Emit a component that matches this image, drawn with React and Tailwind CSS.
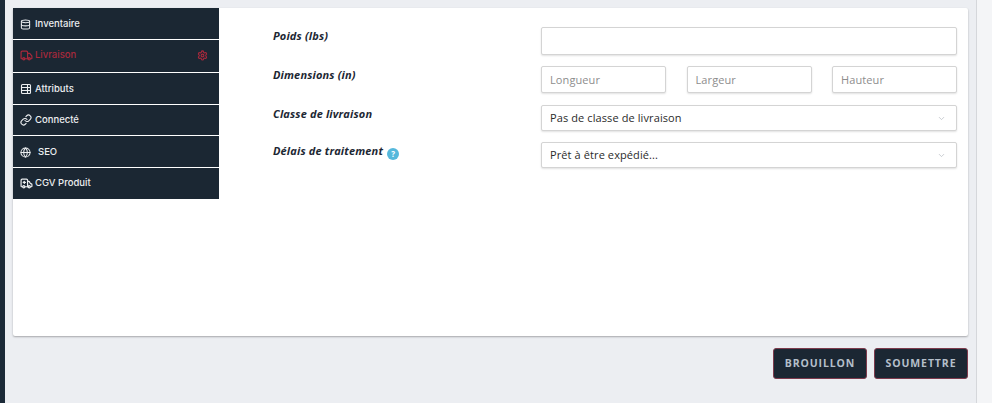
import { Database, Truck, TableProperties, Link, Globe, Ambulance, ChevronDown, Settings } from "lucide-react";

const tabs = [
  { label: "Inventaire", icon: Database, h: "h-[31px]", pad: "pt-[1px]", gap: "gap-[4px]", size: "w-[11px] h-[11px]" },
  { label: "Livraison", icon: Truck, h: "h-[32px]", active: true, pad: "pb-[1px]", gap: "gap-[2px]", size: "w-[13px] h-[13px]" },
  { label: "Attributs", icon: TableProperties, h: "h-[31px]", pad: "pt-[1px]", gap: "gap-[3px]", size: "w-[12px] h-[12px]" },
  { label: "Connecté", icon: Link, h: "h-[30px]", gap: "gap-[3px]", size: "w-[12px] h-[12px]" },
  { label: "SEO", icon: Globe, h: "h-[31px]", pad: "pt-[1px]", gap: "gap-[7px]", size: "w-[11px] h-[11px]" },
  { label: "CGV Produit", icon: Ambulance, h: "h-[31px]", gap: "gap-[2px]", size: "w-[13px] h-[13px]" },
];

const fieldCls =
  "h-full border border-[#d4d4d4] rounded-[2px] bg-white shadow-[0_1px_2px_rgba(0,0,0,0.12)] text-[11px] tracking-[0.1px] flex items-center px-2";

const Label = ({ children }) => (
  <div className="w-[268px] font-bold italic text-[11px] text-[#1c2733] tracking-[0.15px]">{children}</div>
);

const Select = ({ value }) => (
  <div className={`${fieldCls} w-[416px] justify-between text-[#2b2b2b]`}>
    <span>{value}</span>
    <ChevronDown className="w-[9px] h-[9px] text-[#b9bec4] mr-[2px]" strokeWidth={2} />
  </div>
);

export default function App() {
  return (
    <div className="w-[992px] h-[403px] flex bg-[#eceef2] overflow-hidden font-['Open_Sans',sans-serif]">
      <div className="w-[5px] bg-[#1b2a38]" />
      <div className="w-[972px] pl-[8px] pt-[8px] border-r border-[#d5d7db]">
        <div className="w-[955px] h-[328px] bg-white rounded-[2px] flex shadow-[0_1px_2px_rgba(0,0,0,0.3)]">
          <div className="w-[206px] flex flex-col gap-px">
            {tabs.map((t) => (
              <div
                key={t.label}
                className={`${t.h} ${t.pad || ""} ${t.gap} bg-[#1b2733] flex items-center pl-[7px] pr-[11px] font-['Inter',sans-serif] font-medium text-[9.5px] ${
                  t.active ? "text-[#a8293c]" : "text-[#eceef0]"
                }`}
              >
                <t.icon className={t.size} strokeWidth={2.2} />
                <span>{t.label}</span>
                {t.active && <Settings className="w-[11px] h-[11px] ml-auto" strokeWidth={2.4} />}
              </div>
            ))}
          </div>
          <div className="pl-[54px] pr-[11px] pt-[19px] flex-1 flex flex-col">
            <div className="flex h-[28px]">
              <div className="pt-[1px]"><Label>Poids (lbs)</Label></div>
              <div className={`${fieldCls} w-[416px]`} />
            </div>
            <div className="flex h-[27px] mt-[11px]">
              <div className="pt-[1px]"><Label>Dimensions (in)</Label></div>
              <div className="w-[416px] flex justify-between">
                {["Longueur", "Largeur", "Hauteur"].map((p) => (
                  <div key={p} className={`${fieldCls} pt-[2px] w-[125px] text-[#8d8d8d]`}>{p}</div>
                ))}
              </div>
            </div>
            <div className="flex h-[26px] mt-[12px]">
              <div className="pt-[1px]"><Label>Classe de livraison</Label></div>
              <Select value="Pas de classe de livraison" />
            </div>
            <div className="flex h-[26px] mt-[11px]">
              <div className="w-[268px] flex items-start gap-[4px] pt-[1px]">
                <span className="font-bold italic text-[11px] text-[#1c2733] tracking-[0.15px]">Délais de traitement</span>
                <span className="mt-[5px] w-[12px] h-[12px] rounded-full bg-[#55b8dc] text-white text-[8px] font-bold flex items-center justify-center">?</span>
              </div>
              <Select value="Prêt à être expédié..." />
            </div>
          </div>
        </div>
        <div className="w-[955px] flex justify-end gap-[7px] mt-[12px]">
          {["BROUILLON", "SOUMETTRE"].map((b) => (
            <button
              key={b}
              className="w-[94px] h-[31px] bg-[#1b2733] rounded-[3px] border border-[#7d3a4c] text-[#b4bfca] text-[10.5px] font-bold tracking-[0.9px]"
            >
              {b}
            </button>
          ))}
        </div>
      </div>
      <div className="flex-1 bg-[#f4f5f7]" />
    </div>
  );
}
